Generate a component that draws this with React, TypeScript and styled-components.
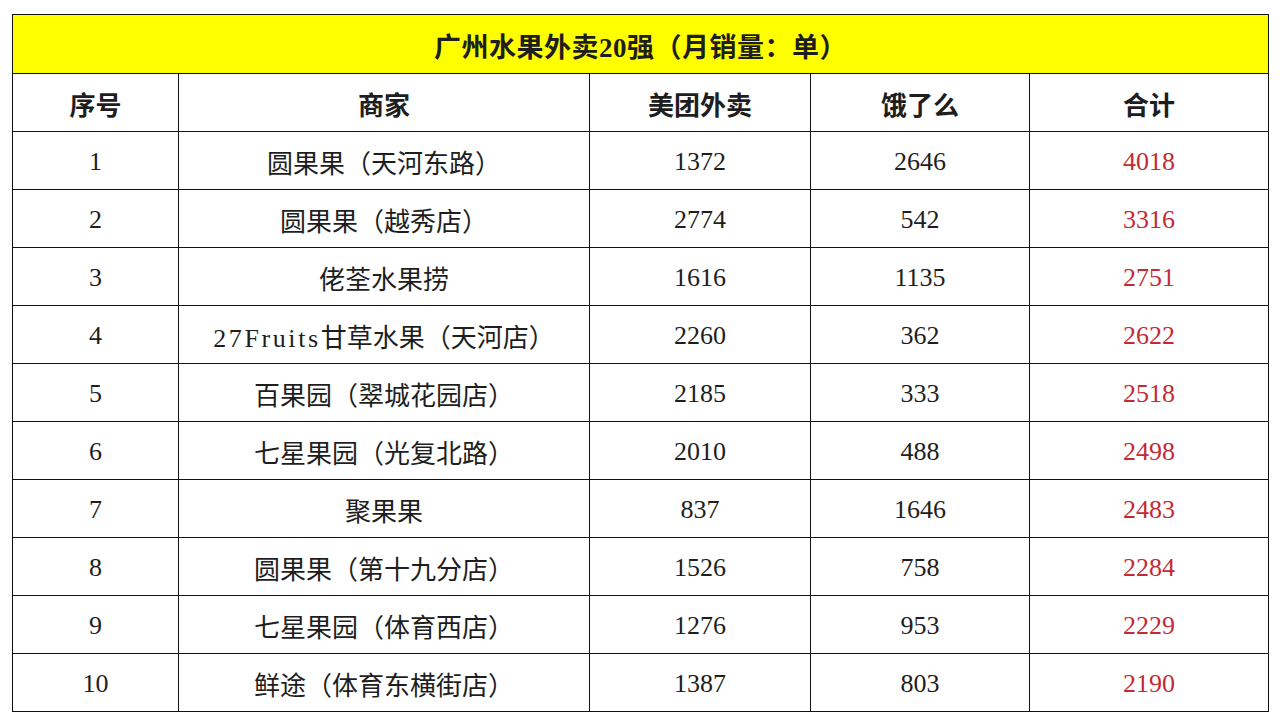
import React from "react";
import styled, { createGlobalStyle } from "styled-components";

const GlobalStyle = createGlobalStyle`
  html, body {
    margin: 0;
    padding: 0;
    background: #fff;
  }
  body {
    font-family: "Liberation Serif", "Noto Sans CJK SC", serif;
    color: #1e1e1e;
  }
`;

const Page = styled.div`
  width: 1280px;
  height: 720px;
  padding: 14px 12px 0 12px;
  box-sizing: border-box;
`;

const Table = styled.table`
  width: 1256px;
  border-collapse: collapse;
  table-layout: fixed;
  border: 1.5px solid #111;

  td, th {
    border: 1.5px solid #111;
    text-align: center;
    vertical-align: middle;
    padding: 2px 0 0 0;
    height: 58px;
    box-sizing: border-box;
  }
`;

const TitleCell = styled.th`
  background: #ffff00;
  font-size: 27px;
  font-weight: bold;
  height: 59px !important;
  letter-spacing: 0.5px;
`;

const HeadCell = styled.th`
  font-size: 26px;
  font-weight: bold;
`;

const Cell = styled.td<{ $red?: boolean }>`
  font-size: 26px;
  font-weight: normal;
  color: ${(p) => (p.$red ? "#c22a34" : "#1e1e1e")};
`;

const Latin = styled.span`
  letter-spacing: 2.6px;
`;

type Row = [string, string, number, number, number];

const rows: Row[] = [
  ["1", "圆果果（天河东路）", 1372, 2646, 4018],
  ["2", "圆果果（越秀店）", 2774, 542, 3316],
  ["3", "佬荃水果捞", 1616, 1135, 2751],
  ["4", "27Fruits甘草水果（天河店）", 2260, 362, 2622],
  ["5", "百果园（翠城花园店）", 2185, 333, 2518],
  ["6", "七星果园（光复北路）", 2010, 488, 2498],
  ["7", "聚果果", 837, 1646, 2483],
  ["8", "圆果果（第十九分店）", 1526, 758, 2284],
  ["9", "七星果园（体育西店）", 1276, 953, 2229],
  ["10", "鲜途（体育东横街店）", 1387, 803, 2190],
];

const renderName = (name: string) => {
  const m = name.match(/^([A-Za-z0-9]+)(.*)$/);
  if (m && /[A-Za-z]/.test(m[1])) {
    return (
      <>
        <Latin>{m[1]}</Latin>
        {m[2]}
      </>
    );
  }
  return name;
};

export default function App() {
  return (
    <>
      <GlobalStyle />
      <Page>
        <Table>
          <colgroup>
            <col style={{ width: 166 }} />
            <col style={{ width: 411 }} />
            <col style={{ width: 221 }} />
            <col style={{ width: 219 }} />
            <col style={{ width: 239 }} />
          </colgroup>
          <thead>
            <tr>
              <TitleCell colSpan={5}>广州水果外卖20强（月销量：单）</TitleCell>
            </tr>
            <tr>
              <HeadCell>序号</HeadCell>
              <HeadCell>商家</HeadCell>
              <HeadCell>美团外卖</HeadCell>
              <HeadCell>饿了么</HeadCell>
              <HeadCell>合计</HeadCell>
            </tr>
          </thead>
          <tbody>
            {rows.map((r) => (
              <tr key={r[0]}>
                <Cell>{r[0]}</Cell>
                <Cell>{renderName(r[1])}</Cell>
                <Cell>{r[2]}</Cell>
                <Cell>{r[3]}</Cell>
                <Cell $red>{r[4]}</Cell>
              </tr>
            ))}
          </tbody>
        </Table>
      </Page>
    </>
  );
}
